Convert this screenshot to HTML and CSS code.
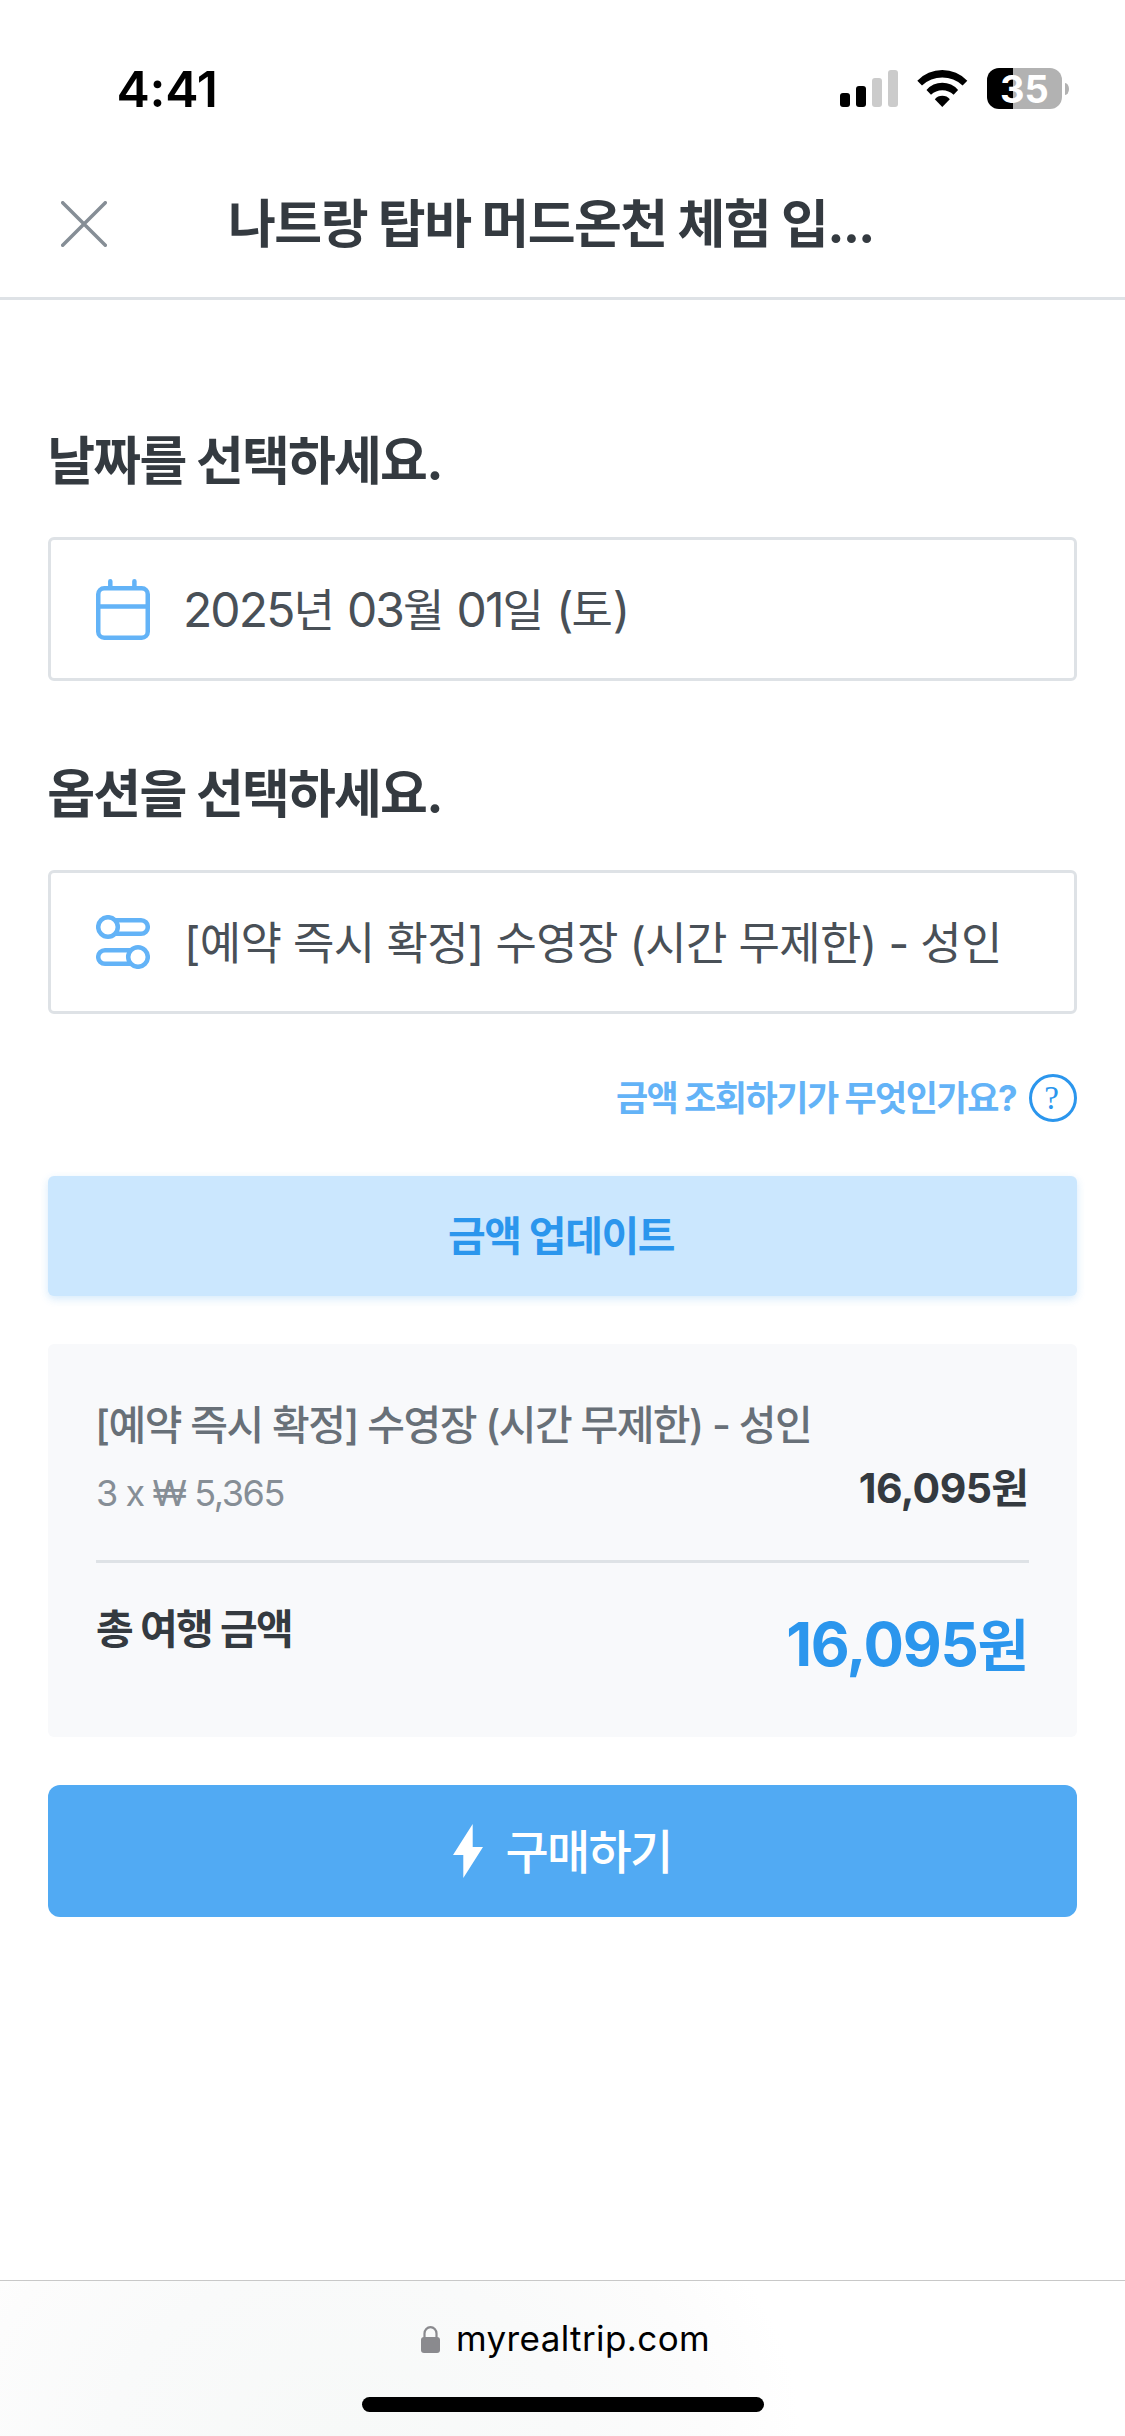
FILE: index.html
```html
<!DOCTYPE html>
<html lang="ko">
<head>
<meta charset="utf-8">
<title>마이리얼트립</title>
<link rel="stylesheet" href="styles.css">
</head>
<body>
<div class="screen">
  <div class="status">
    <span class="time">4:41</span>
    <div class="status-icons">
      <svg class="signal" width="58" height="37" viewBox="0 0 58 37">
        <rect x="0" y="23" width="10" height="14" rx="3"/>
        <rect x="16" y="16" width="10" height="21" rx="3"/>
        <g fill="#cbcbcb"><rect x="32" y="8" width="10" height="29" rx="3"/><rect x="48" y="0" width="10" height="37" rx="3"/></g>
      </svg>
      <svg class="wifi" width="51" height="37" viewBox="0 0 51 37">
        <path d="M.3 10.700A34.600 34.600 0 0 1 50.300 10.700L45.600 15.500A29.800 29.800 0 0 0 5 15.500Z"/>
        <path d="M9.500 20A20.700 20.700 0 0 1 41.100 20L36.600 24.700A16.400 16.400 0 0 0 14 24.700Z"/>
        <path d="M17.800 29.300A9.500 9.500 0 0 1 32.800 29.300L25.300 37Z"/>
      </svg>
      <div class="battery"><div class="cell"><span>35</span></div><i class="nub"></i></div>
    </div>
  </div>

  <header class="bar">
    <svg class="close" width="46" height="46" viewBox="0 0 46 46"><path d="M1.700 1.700 44.300 44.300M44.300 1.700 1.700 44.300"/></svg>
    <h1 class="title">나트랑 탑바 머드온천 체험 입<span class="dots">...</span></h1>
  </header>

  <main class="content">
    <h2 class="heading">날짜를 선택하세요.</h2>
    <div class="field">
      <svg class="field-icon" width="54" height="61" viewBox="0 0 54 61">
        <rect x="2.250" y="9.250" width="49.500" height="49.500" rx="6"/><path d="M2 27.500H52M14.300 8V2.250M38.400 8V2.250"/>
      </svg>
      <span class="value date"><b>2025</b>년 <b>03</b>월 <b>01</b>일 <b>(</b>토<b>)</b></span>
    </div>

    <h2 class="heading second">옵션을 선택하세요.</h2>
    <div class="field">
      <svg class="field-icon" width="54" height="54" viewBox="0 0 54 54">
        <circle cx="12" cy="12" r="9.800"/><path d="M20 5.200H45a6.800 6.800 0 0 1 0 13.600H20"/>
        <circle cx="42" cy="42" r="9.800"/><path d="M34 35.200H9a6.800 6.800 0 0 0 0 13.600H34"/>
      </svg>
      <span class="value option">[예약 즉시 확정] 수영장 (시간 무제한) - 성인</span>
    </div>

    <div class="help"><span class="help-text">금액 조회하기가 무엇인가요?</span><span class="help-mark">?</span></div>

    <div class="update"><span>금액 업데이트</span></div>

    <section class="summary">
      <div class="item">[예약 즉시 확정] 수영장 (시간 무제한) - 성인</div>
      <div class="line"><span class="unit">3 x ₩ 5,365</span><span class="price">16,095<small>원</small></span></div>
      <div class="total"><span class="total-label">총 여행 금액</span><span class="total-price">16,095<small>원</small></span></div>
    </section>

    <div class="buy">
      <svg width="30" height="54" viewBox="0 0 30 54"><path d="M19.700 0V23H30L10.300 54V31H0Z"/></svg>
      <span>구매하기</span>
    </div>
  </main>

  <footer class="browser">
    <div class="address">
      <svg width="19" height="27" viewBox="0 0 19 27"><path d="M3.500 12V7.500a6 6.300 0 0 1 12 0V12" fill="none" stroke="#8a8a8e" stroke-width="2.200"/><rect y="11" width="19" height="16" rx="3" fill="#8a8a8e"/></svg>
      <span>myrealtrip.com</span>
    </div>
    <div class="home"></div>
  </footer>
</div>
</body>
</html>
```
FILE: styles.css
```css
* { box-sizing: border-box; margin: 0; padding: 0; }
body { background: #fff; }
.screen {
  width: 1125px; height: 2436px; display: flex; flex-direction: column;
  font-family: Inter, "Noto Sans CJK KR", sans-serif; color: #343a40; white-space: nowrap; overflow: hidden;
}
.status { height: 156px; padding: 64px 56px 0 116.500px; display: flex; justify-content: space-between; align-items: flex-start; color: #000; }
.time { font-size: 50px; line-height: 50px; font-weight: 600; letter-spacing: -0.200px; }
.status-icons { display: flex; align-items: flex-start; padding-top: 4px; }
.signal, .wifi { margin-top: 2px; }
.wifi { margin: 2px 19px 0; }
.battery { display: flex; align-items: center; gap: 3px; }
.cell {
  width: 75px; height: 41px; border-radius: 12px; color: #fff; text-align: center;
  background: linear-gradient(to right, #000 26px, #b2b2b2 26px);
  font-size: 38px; line-height: 42px; font-weight: 700;
}
.nub { width: 4px; height: 12px; border-radius: 0 4px 4px 0 / 0 6px 6px 0; background: #b2b2b2; }

.bar { height: 144px; border-bottom: 3px solid #dee2e6; padding: 0 61px; display: flex; align-items: center; }
.close { fill: none; stroke: #868e96; stroke-width: 3.500; stroke-linecap: round; margin-top: -5px; }
.title { margin: -3px 0 0 121px; font-size: 52px; line-height: 70px; font-weight: 700; letter-spacing: -1.500px; }
.dots { letter-spacing: -2px; }

.content { padding: 126px 48px 0; flex: 1; }
.heading { font-size: 52px; line-height: 72px; font-weight: 700; letter-spacing: -1.800px; margin: 0 0 39px -0.700px; }
.second { margin-top: 78px; }
.field { height: 144px; border: 3px solid #dee2e6; border-radius: 6px; display: flex; align-items: center; padding-left: 45px; gap: 34px; }
.field-icon { fill: none; stroke: #63b3f7; stroke-width: 4.500; stroke-linecap: round; }
.value { color: #495057; font-size: 45px; line-height: 60px; letter-spacing: -0.700px; padding-top: 3px; }
.date { letter-spacing: -0.300px; margin-left: -1px; }
.value b { font-weight: 400; font-size: 48px; letter-spacing: -1.900px; }
.help { margin-top: 60px; height: 48px; display: flex; justify-content: flex-end; align-items: center; gap: 13px; }
.help-text { font-size: 35px; line-height: 48px; font-weight: 700; color: #63b3f7; letter-spacing: -1.500px; }
.help-mark { width: 48px; height: 48px; border: 3px solid #2b96ed; border-radius: 50%; padding-right: 3px; color: #2b96ed; font-family: "Liberation Serif", serif; font-size: 33px; line-height: 43px; text-align: center; }
.update { margin-top: 54px; height: 120px; border-radius: 6px; background: #cbe7fe; box-shadow: 0 3px 9px rgba(43, 150, 237, 0.2); display: flex; align-items: center; justify-content: center; padding-right: 3px; color: #2b96ed; font-size: 41px; line-height: 60px; font-weight: 700; letter-spacing: -1.400px; }
.summary { margin-top: 48px; height: 393px; border-radius: 6px; background: #f8f9fb; padding: 51px 48px 0; }
.item { color: #687078; font-size: 41px; line-height: 60px; font-weight: 500; letter-spacing: -1.550px; margin-left: -1px; }
.line { height: 108px; border-bottom: 3px solid #dee2e6; display: flex; justify-content: space-between; }
.unit { margin-top: 13px; color: #868e96; font-size: 36px; line-height: 50px; letter-spacing: -1.400px; }
.price { font-size: 41px; line-height: 60px; font-weight: 700; margin-top: 3px; letter-spacing: -0.600px; }
.price small { font-size: 41px; font-weight: 700; letter-spacing: 0; }
.total { display: flex; justify-content: space-between; align-items: flex-start; padding-top: 36px; }
.total-label { font-size: 41px; line-height: 60px; font-weight: 700; letter-spacing: -1.700px; }
.total-price { font-size: 60px; line-height: 90px; font-weight: 700; color: #2b96ed; letter-spacing: -1.300px; }
.total-price small { font-size: 56px; font-weight: 700; letter-spacing: 0; }
.buy { margin-top: 48px; height: 132px; border-radius: 12px; background: #51aaf3; color: #fff; display: flex; align-items: center; justify-content: center; gap: 22px; font-size: 47px; line-height: 60px; font-weight: 500; letter-spacing: -1.700px; }
.buy svg { fill: #fff; }
.buy span { padding-top: 2px; }

.browser { height: 156px; border-top: 1px solid #c8c8c8; background: radial-gradient(ellipse 460px 340px at 340px 100%, #f7f9f8 0%, #f9fafa 50%, #fcfcfc 80%, #fff 100%); display: flex; flex-direction: column; align-items: center; }
.address { display: flex; align-items: center; gap: 16px; margin-top: 34px; padding-left: 6px; height: 48px; color: #000; font-size: 35px; line-height: 48px; letter-spacing: 0.400px; }
.address span { margin-top: -3px; }
.home { margin-top: 34px; width: 402px; height: 15px; border-radius: 8px; background: #000; }
```
